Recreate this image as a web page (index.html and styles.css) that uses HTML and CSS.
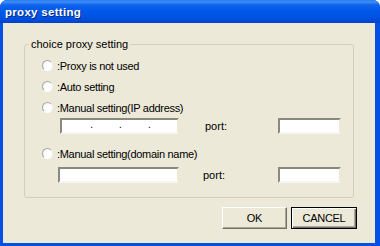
FILE: index.html
```html
<!DOCTYPE html>
<html lang="en">
<head>
    <meta charset="UTF-8">
    <meta name="viewport" content="width=device-width, initial-scale=1.0">
    <title>proxy setting</title>
    <link rel="stylesheet" href="styles.css">
</head>
<body>
    <div class="window">
        <div class="titlebar">
            <span class="title">proxy setting</span>
        </div>
        <div class="client">
            <fieldset class="group">
                <legend class="group-title">choice proxy setting</legend>

                <label class="option first">
                    <span class="radio"></span>
                    <span class="option-text">:Proxy is not used</span>
                </label>
                <label class="option">
                    <span class="radio"></span>
                    <span class="option-text">:Auto setting</span>
                </label>
                <label class="option">
                    <span class="radio"></span>
                    <span class="option-text">:Manual setting(IP address)</span>
                </label>
                <div class="address-row">
                    <div class="textbox ip-box">
                        <span class="dot">.</span>
                        <span class="dot">.</span>
                        <span class="dot">.</span>
                    </div>
                    <span class="port-label">port:</span>
                    <div class="textbox port-box"></div>
                </div>

                <label class="option fourth">
                    <span class="radio"></span>
                    <span class="option-text">:Manual setting(domain name)</span>
                </label>
                <div class="address-row domain-row">
                    <div class="textbox domain-box"></div>
                    <span class="port-label">port:</span>
                    <div class="textbox port-box"></div>
                </div>
            </fieldset>

            <div class="buttons">
                <button class="button">OK</button>
                <button class="button default">CANCEL</button>
            </div>
        </div>
    </div>
</body>
</html>
```

FILE: styles.css
```css
html, body {
    margin: 0;
    padding: 0;
    background-color: #ffffff;
}
body {
    width: 380px;
    height: 246px;
    overflow: hidden;
    font-family: 'Liberation Sans', Tahoma, Arial, sans-serif;
    font-size: 11px;
    color: #000;
}
.window {
    width: 380px;
    height: 246px;
    border-radius: 7px 7px 0 0;
    background-color: #0550e4;
    display: flex;
    flex-direction: column;
    overflow: hidden;
}
.titlebar {
    height: 23px;
    flex: none;
    background: linear-gradient(#2a7cf0 0, #3d8df8 2px, #0f63ec 5px, #0058e8 11px, #0053e2 17px, #0048d6 21px, #0040c8 23px);
    display: flex;
    align-items: center;
    padding-left: 5px;
}
.title {
    color: #ffffff;
    font-family: 'Liberation Sans', Arial, sans-serif;
    font-weight: bold;
    font-size: 11.5px;
    letter-spacing: 0.3px;
    text-shadow: 1px 1px 0 #0a2a8a;
}
.client {
    flex: 1;
    margin: 0 5px 3px 3px;
    background-color: #ece9d8;
    padding: 0 21px 0 21px;
    display: flex;
    flex-direction: column;
}
.group {
    margin: 15px 0 0 0;
    padding: 0;
    height: 160px;
    border: 1px solid #d0d0bf;
    border-radius: 3px;
    box-sizing: border-box;
}
.group-title {
    padding: 0 2px;
    margin-left: 4px;
    color: #000;
}
.option {
    display: flex;
    align-items: center;
    height: 21px;
    padding-left: 17px;
}
.option.first {
    margin-top: 5px;
}
.option.fourth {
    margin-top: 9px;
}
.radio {
    width: 9px;
    height: 9px;
    border-radius: 50%;
    border: 1px solid;
    border-color: #a8a8a0 #f4f4f0 #ffffff #a8a8a0;
    background: radial-gradient(circle at 65% 65%, #ffffff 40%, #f0efe8 100%);
    flex: none;
}
.option-text {
    margin-left: 4px;
    letter-spacing: -0.3px;
}
.address-row {
    display: flex;
    align-items: center;
    height: 16px;
    padding-left: 35px;
}
.domain-row {
    padding-left: 33px;
    margin-top: 3px;
}
.textbox {
    height: 16px;
    box-sizing: border-box;
    background-color: #ffffff;
    border: 2px solid;
    border-color: #8a897f #ece9d8 #f6f5ef #8a897f;
    flex: none;
}
.ip-box {
    width: 119px;
    display: flex;
    justify-content: center;
    gap: 26px;
    padding-left: 2px;
    line-height: 10px;
}
.dot {
    font-size: 10px;
}
.domain-box {
    width: 121px;
}
.port-label {
    margin-left: 26px;
    width: 73px;
}
.domain-row .port-label {
    margin-left: 24px;
    width: 75px;
}
.port-box {
    width: 63px;
}
.buttons {
    display: flex;
    justify-content: flex-end;
    gap: 4px;
    margin-top: 9px;
    margin-right: -3px;
}
.button {
    width: 65px;
    height: 22px;
    font-family: 'Liberation Sans', Tahoma, Arial, sans-serif;
    font-size: 11px;
    letter-spacing: -0.3px;
    color: #000;
    background-color: #ece9d8;
    border: 1px solid;
    border-color: #ffffff #716f64 #716f64 #ffffff;
    box-shadow: inset -1px -1px 0 #aca899;
    padding: 0;
}
.button.default {
    width: 66px;
    border: 1px solid #000;
    box-shadow: inset 1px 1px 0 #ffffff, inset -1px -1px 0 #716f64, inset -2px -2px 0 #aca899;
}
```
